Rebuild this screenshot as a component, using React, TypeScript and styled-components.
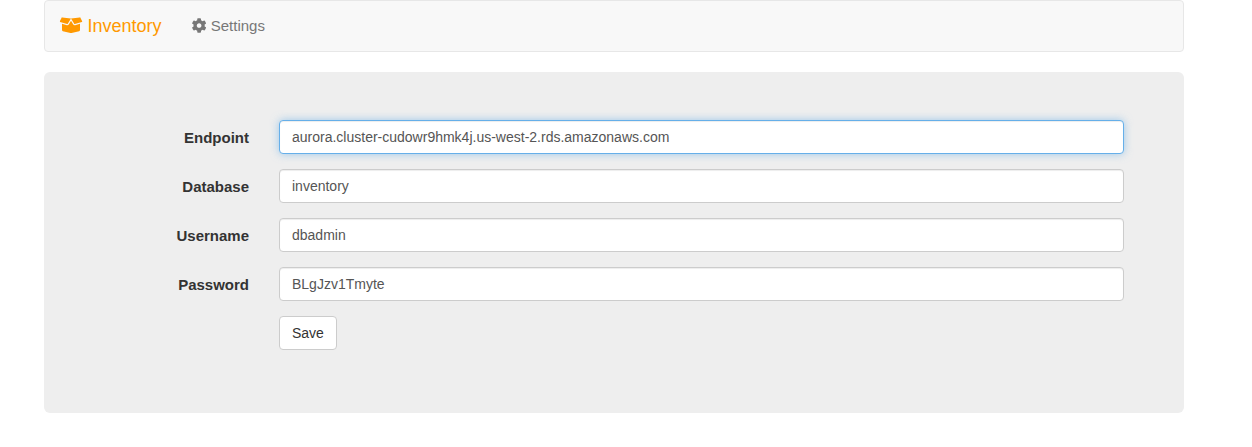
import React from "react";
import styled, { createGlobalStyle } from "styled-components";
import { FaBoxOpen, FaCog } from "react-icons/fa";

const GlobalStyle = createGlobalStyle`
  *, *::before, *::after { box-sizing: border-box; }
  body {
    margin: 0;
    background: #fff;
    color: #333;
    font-family: "Liberation Sans", Arial, sans-serif;
    font-size: 14px;
    line-height: 20px;
  }
`;

const Container = styled.main`
  width: 1140px;
  margin-left: 44px;
`;

const Navbar = styled.nav`
  display: flex;
  height: 52px;
  margin-bottom: 20px;
  background: #f8f8f8;
  border: 1px solid #e7e7e7;
  border-radius: 4px;
`;

const Brand = styled.a`
  padding: 15px;
  font-size: 18px;
  line-height: 20px;
  color: #ff9900;

  svg {
    width: 1.25em;
    height: 1em;
    vertical-align: -0.125em;
    transform: translate(-0.25px, 0.25px);
  }
`;

const NavLink = styled.a`
  padding: 15px;
  font-size: 15px;
  line-height: 20px;
  color: #777;

  svg {
    width: 1em;
    height: 1em;
    vertical-align: -0.125em;
    transform: translateX(-0.4px);
  }
`;

const Jumbotron = styled.section`
  height: 341px;
  padding: 48px 60px;
  background: #eee;
  border-radius: 6px;
`;

const Form = styled.form`
  display: flex;
  flex-direction: column;
  gap: 15px;
`;

const Row = styled.div`
  display: grid;
  grid-template-columns: 145px 845px;
  column-gap: 30px;
`;

const Label = styled.label`
  padding-top: 8px;
  text-align: right;
  font-size: 15px;
  font-weight: 700;
`;

const Input = styled.input<{ $active?: boolean }>`
  height: 34px;
  padding: 6px 12px;
  font: inherit;
  color: #555;
  background: #fff;
  outline: 0;
  border: 1px solid ${(p) => (p.$active ? "#66afe9" : "#ccc")};
  border-radius: 4px;
  box-shadow: inset 0 1px 1px rgba(0, 0, 0, 0.075)
    ${(p) => (p.$active ? ", 0 0 8px rgba(102, 175, 233, 0.6)" : "")};
`;

const SaveButton = styled.button`
  grid-column: 2;
  justify-self: start;
  height: 34px;
  padding: 6px 12px;
  font: inherit;
  color: #333;
  background: #fff;
  border: 1px solid #ccc;
  border-radius: 4px;
`;

const fields = [
  { id: "endpoint", label: "Endpoint", value: "aurora.cluster-cudowr9hmk4j.us-west-2.rds.amazonaws.com" },
  { id: "database", label: "Database", value: "inventory" },
  { id: "username", label: "Username", value: "dbadmin" },
  { id: "password", label: "Password", value: "BLgJzv1Tmyte" },
];

export default function App() {
  return (
    <>
      <GlobalStyle />
      <Container>
        <Navbar>
          <Brand><FaBoxOpen /> Inventory</Brand>
          <NavLink><FaCog /> Settings</NavLink>
        </Navbar>
        <Jumbotron>
          <Form>
            {fields.map((f) => (
              <Row key={f.id}>
                <Label htmlFor={f.id}>{f.label}</Label>
                <Input id={f.id} defaultValue={f.value} spellCheck={false} $active={f.id === "endpoint"} />
              </Row>
            ))}
            <Row>
              <SaveButton type="button">Save</SaveButton>
            </Row>
          </Form>
        </Jumbotron>
      </Container>
    </>
  );
}
